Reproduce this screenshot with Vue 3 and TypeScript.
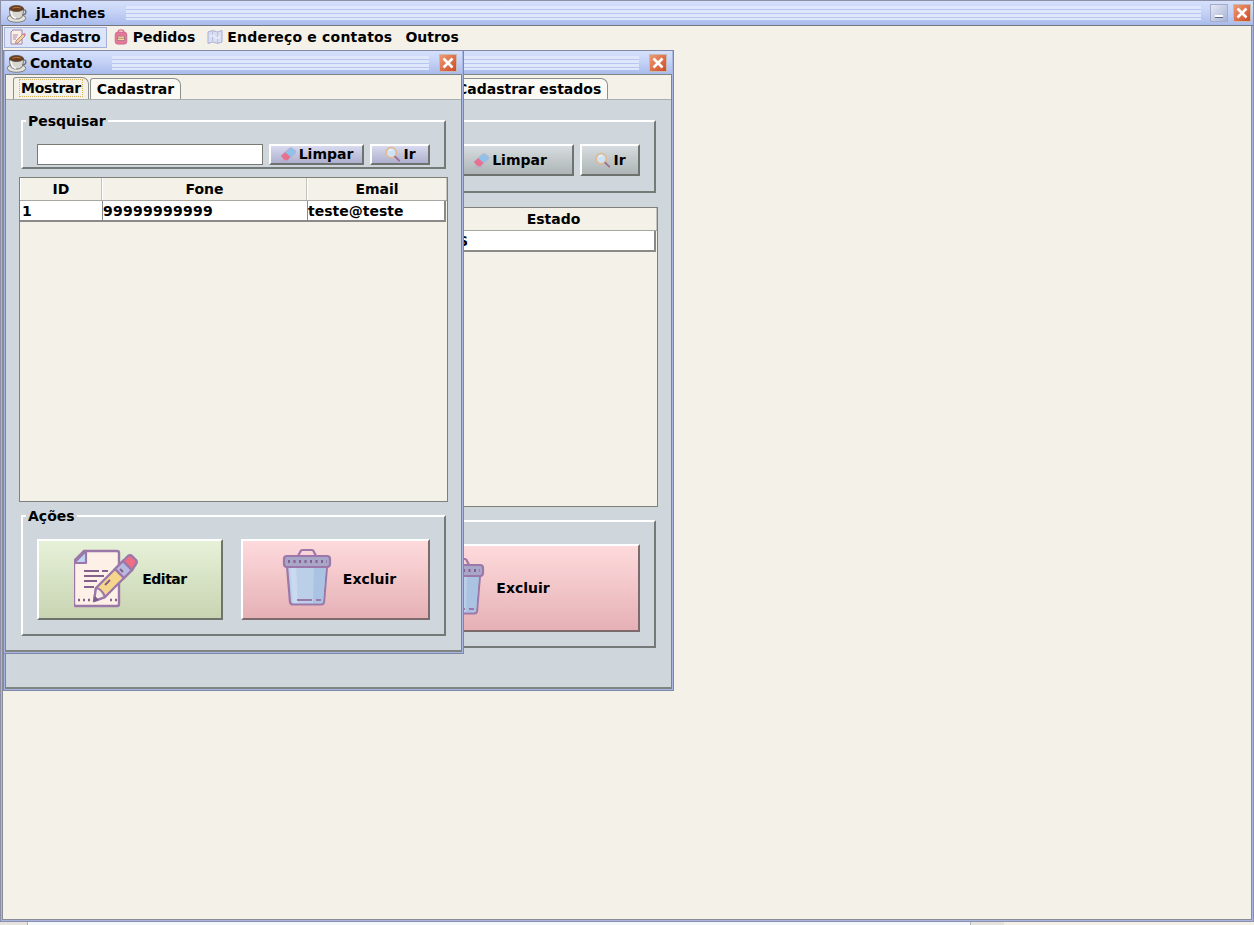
<script setup lang="ts">
const menus = [
  { label: 'Cadastro', icon: 'i-note-small', active: true },
  { label: 'Pedidos', icon: 'i-bag', active: false },
  { label: 'Endereço e contatos', icon: 'i-map', active: false },
  { label: 'Outros', icon: '', active: false },
]
</script>

<template>
  <div class="page">
    <svg class="defs" width="0" height="0">
      <defs>
        <symbol id="i-cup" viewBox="0 0 20 20">
          <ellipse cx="9.500" cy="15.300" rx="9.300" ry="4" fill="#e3e3e1" stroke="#77736c" stroke-width="0.9" />
          <path d="M2.500 5.500 C2.500 14 4.500 16 9.500 16 S16.500 14 16.500 5.500 Z" fill="#d9d7d2" stroke="#6d675e" stroke-width="0.9" />
          <path d="M4 8 C4.500 13 6 15 9 15.300" fill="none" stroke="#fbfaf8" stroke-width="1.500" />
          <path d="M16 7 C20 6 20 11.500 15.500 12" fill="none" stroke="#6d675e" stroke-width="1.200" />
          <ellipse cx="9.500" cy="5.500" rx="7" ry="3" fill="#6a3d1f" stroke="#4a4036" stroke-width="0.7" />
          <path d="M5.500 5.200 Q9 3.500 13.500 5" fill="none" stroke="#b8793f" stroke-width="1" />
        </symbol>
        <symbol id="i-note" viewBox="0 0 64 64">
          <path d="M10 4 H43 Q45 4 45 6 V57 Q45 59 43 59 H2 Q0 59 0 57 V14 Z" fill="#fdf1e7" stroke="#9b78a9" stroke-width="2.400" />
          <path d="M12 4 V16 H0 Z" fill="#bdd5f2" stroke="#9b78a9" stroke-width="2.200" stroke-linejoin="round" />
          <path d="M10 24 H25 M28 24 H34 M10 29 H30 M10 34 H23 M10 40 H20" stroke="#84608f" stroke-width="2.200" />
          <path d="M4 53 H6 M9 53 H11 M14 53 H16 M36 53 H38 M41 53 H43" stroke="#84608f" stroke-width="2.400" />
          <path d="M22 41 L49 14 L58 23 L31 50 L20 54 Z" fill="#f6d58c" stroke="#9b78a9" stroke-width="2.400" stroke-linejoin="round" />
          <path d="M20 54 L22 41 Q28 42 31 50 Z" fill="#f7ece4" stroke="#9b78a9" stroke-width="2.200" stroke-linejoin="round" />
          <path d="M19 55 L21 49 L25 53 Z" fill="#7e5a8c" />
          <path d="M41 22 L49 14 L58 23 L50 31 Z" fill="#b8b9de" stroke="#9b78a9" stroke-width="2.400" />
          <path d="M49 14 L54 9 Q56 7.500 58 9 L62 13 Q63.500 15 62 17 L58 23 Z" fill="#ee6e85" stroke="#9b78a9" stroke-width="2.400" stroke-linejoin="round" />
          <path d="M46 22 L49 25 M31 38 L36 33" stroke="#84608f" stroke-width="2" />
        </symbol>
        <symbol id="i-note-small" viewBox="0 0 16 16">
          <path d="M3 1 H12 V15 H1 V3 Z" fill="#fbeee4" stroke="#9f84ae" stroke-width="1" />
          <path d="M3 6 H8 M3 8 H7 M3 10 H6" stroke="#a080ae" stroke-width="0.9" />
          <path d="M6 12 L13 5 L15 7 L8 14 L5.500 14.500 Z" fill="#f3d38c" stroke="#a67f9f" stroke-width="0.9" />
          <path d="M13 5 L14.200 3.800 L16 5.600 L15 7 Z" fill="#e97a8e" />
        </symbol>
        <symbol id="i-bag" viewBox="0 0 16 18">
          <path d="M5 4 V2.500 Q5 1 8 1 T11 2.500 V4" fill="none" stroke="#d9708e" stroke-width="1.600" />
          <rect x="1.500" y="3.500" width="13" height="13.500" rx="3" fill="#e7789a" stroke="#c8688c" />
          <rect x="4" y="8" width="8" height="5" fill="#f4d99a" stroke="#9c6c88" stroke-width="0.8" />
          <path d="M4 10.500 H12" stroke="#9c6c88" stroke-width="0.8" />
        </symbol>
        <symbol id="i-map" viewBox="0 0 16 16">
          <path d="M1 3 L5.500 1.500 L10.500 3 L15 1.500 V13 L10.500 14.500 L5.500 13 L1 14.500 Z" fill="#d9def3" stroke="#aab0d4" />
          <path d="M5.500 1.500 V13 M10.500 3 V14.500" stroke="#b7bddd" stroke-width="0.9" />
          <path d="M3 8 Q6 5 8 8 T13 7" fill="none" stroke="#eef1fc" stroke-width="1.300" />
        </symbol>
        <symbol id="i-eraser" viewBox="0 0 18 16">
          <path d="M1 10 L10 2 Q11.500 .8 13 1.800 L16.500 4.500 Q17.500 6 16 7.500 L8 14.500 H5 Z" fill="#8fc1ea" stroke="#b9a9c8" stroke-width="0.7" />
          <path d="M1 10 L5.500 6.200 L11 11 L8 14.500 H5 Z" fill="#e8718d" />
          <path d="M1.500 15.500 H10" stroke="#b8a8c4" stroke-width="0.8" />
        </symbol>
        <symbol id="i-search" viewBox="0 0 18 18">
          <circle cx="7.500" cy="7.500" r="5.800" fill="#cfe2f5" stroke="#e3b787" stroke-width="1.700" />
          <path d="M5 5.500 Q6.500 3.800 9 4.500" fill="none" stroke="#fff" stroke-width="1" />
          <path d="M12 12 L16.500 16.500" stroke="#a0708f" stroke-width="2.200" stroke-linecap="round" />
        </symbol>
        <symbol id="i-trash" viewBox="0 0 64 64">
          <path d="M23 9 L26 3.500 Q26.500 3 28 3 H37 Q38 3 38.500 4 L41 9" fill="none" stroke="#9b78a9" stroke-width="2.200" />
          <path d="M12 19 H52 L49 55 Q48.800 57.500 46 57.500 H18 Q15.500 57.500 15 55 Z" fill="#bccfe9" stroke="#9b78a9" stroke-width="2.200" />
          <path d="M39 20 H51 L48 56 H38 Z" fill="#aac3e2" />
          <path d="M15 20 H21 L23 56 H18 Z" fill="#c9d9ef" />
          <rect x="9" y="9" width="46" height="11" rx="3" fill="#a8a7c8" stroke="#9b78a9" stroke-width="2.200" />
          <path d="M13 14.500 H52" stroke="#84608f" stroke-width="3" stroke-dasharray="2 3.500" />
          <path d="M22 53 H37 M41 53 H46" stroke="#9b78a9" stroke-width="1.800" />
        </symbol>
        <symbol id="i-x" viewBox="0 0 16 16">
          <path d="M3.500 3.500 L12.500 12.500 M12.500 3.500 L3.500 12.500" stroke="#fff" stroke-width="2.600" />
        </symbol>
      </defs>
    </svg>

    <div class="frame">
      <header class="titlebar main-title">
        <svg class="cup"><use href="#i-cup" /></svg>
        <span class="main-name">jLanches</span>
        <span class="bumps"></span>
        <button class="winbtn min"><span class="min-mark"></span></button>
        <button class="winbtn close"><svg class="x"><use href="#i-x" /></svg></button>
      </header>

      <nav class="menubar">
        <div v-for="m in menus" :key="m.label" class="menu" :class="{ active: m.active, plain: !m.icon }">
          <svg v-if="m.icon" class="mi"><use :href="'#' + m.icon" /></svg>
          <span>{{ m.label }}</span>
        </div>
      </nav>

      <main class="desktop">
        <!-- Janela de trás: só a parte visível tem texto -->
        <section class="window back">
          <header class="titlebar win-title">
            <span class="bumps"></span>
            <button class="winbtn close"><svg class="x"><use href="#i-x" /></svg></button>
          </header>
          <div class="body">
            <div class="tabs">
              <div class="tab first sel back-first"></div>
              <div class="tab">Cadastrar estados</div>
            </div>
            <div class="panel">
              <div class="group search">
                <div class="search-row">
                  <input class="field" type="text" />
                  <button class="btn grey limpar"><svg class="bi"><use href="#i-eraser" /></svg>Limpar</button>
                  <button class="btn grey ir"><svg class="bi"><use href="#i-search" /></svg>Ir</button>
                </div>
              </div>
              <div class="table">
                <div class="thead">
                  <div class="th wide"></div>
                  <div class="th estado">Estado</div>
                </div>
                <div class="tr">
                  <div class="td wide"></div>
                  <div class="td estado">S</div>
                </div>
              </div>
              <div class="group actions">
                <div class="action-row">
                  <button class="action green"></button>
                  <button class="action pink"><svg class="big"><use href="#i-trash" /></svg>Excluir</button>
                </div>
              </div>
            </div>
          </div>
        </section>

        <!-- Janela de contato (frente) -->
        <section class="window front">
          <header class="titlebar win-title">
            <svg class="cup"><use href="#i-cup" /></svg>
            <span class="win-name">Contato</span>
            <span class="bumps"></span>
            <button class="winbtn close"><svg class="x"><use href="#i-x" /></svg></button>
          </header>
          <div class="body">
            <div class="tabs">
              <div class="tab first sel"><span class="focus">Mostrar</span></div>
              <div class="tab">Cadastrar</div>
            </div>
            <div class="panel">
              <div class="group search">
                <span class="legend">Pesquisar</span>
                <div class="search-row">
                  <input class="field" type="text" />
                  <button class="btn lav limpar"><svg class="bi"><use href="#i-eraser" /></svg>Limpar</button>
                  <button class="btn lav ir"><svg class="bi"><use href="#i-search" /></svg>Ir</button>
                </div>
              </div>
              <div class="table">
                <div class="thead">
                  <div class="th c-id">ID</div>
                  <div class="th c-fone">Fone</div>
                  <div class="th c-mail">Email</div>
                </div>
                <div class="tr">
                  <div class="td c-id">1</div>
                  <div class="td c-fone">99999999999</div>
                  <div class="td c-mail">teste@teste</div>
                </div>
              </div>
              <div class="group actions">
                <span class="legend">Ações</span>
                <div class="action-row">
                  <button class="action green"><svg class="big"><use href="#i-note" /></svg><span class="ed">Editar</span></button>
                  <button class="action pink"><svg class="big"><use href="#i-trash" /></svg>Excluir</button>
                </div>
              </div>
            </div>
          </div>
        </section>
      </main>
    </div>

    <footer class="strip">
      <span class="s-a"></span>
      <span class="s-b"></span>
      <span class="s-c"></span>
      <span class="s-d"></span>
    </footer>
  </div>
</template>

<style>
html, body { margin: 0; background: #f4f1e9; overflow: hidden; }
</style>

<style scoped>
.page {
  width: 1254px;
  height: 925px;
  display: flex;
  flex-direction: column;
  overflow: hidden;
  font: bold 14px "DejaVu Sans", sans-serif;
  color: #000;
  background: #f4f1e9;
}
.defs { position: absolute; }
.frame {
  height: 922px;
  box-sizing: border-box;
  border: 1px solid #8d8fa6;
  box-shadow:
    inset 1px 0 0 #a9b6e4, inset -1px 0 0 #a9b6e4, inset 0 -1px 0 #a9b6e4,
    inset 2px 0 0 #8a8c98, inset -2px 0 0 #8a8c98, inset 0 -2px 0 #8a8c98;
  display: flex;
  flex-direction: column;
}
.titlebar {
  display: flex;
  align-items: center;
  background: linear-gradient(#d6e0fb, #c6d3f6 45%, #a9bbec);
  flex: none;
}
.main-title {
  height: 24px;
  padding: 0 2px 0 6px;
  border-bottom: 1px solid #74767e;
}
.main-name { margin-left: 9px; }
.cup { width: 20px; height: 20px; flex: none; }
.bumps {
  flex: 1;
  height: 14px;
  margin: 0 9px 0 21px;
  background: repeating-linear-gradient(#dfe7fc 0 3px, #b7c5ef 3px 4px);
}
.winbtn {
  width: 18px;
  height: 18px;
  box-sizing: border-box;
  padding: 0;
  flex: none;
  display: flex;
  align-items: center;
  justify-content: center;
  border: 1px solid #8c93ac;
}
.min {
  margin-right: 5px;
  background: linear-gradient(135deg, #e4e9f7, #a8b3d4);
  border-color: #a6adc6;
}
.min-mark { width: 8px; height: 2px; margin-top: 6px; background: #fff; box-shadow: 0 1px 0 #5b6486; }
.close {
  background: linear-gradient(135deg, #ee9a72, #cc4c28);
  border-color: #c9b9b4;
}
.x { width: 16px; height: 16px; }
.menubar {
  height: 24px;
  box-sizing: border-box;
  padding: 0 0 2px 1px;
  flex: none;
  display: flex;
  align-items: center;
  margin: 0 2px;
  background: #f4f1e9;
}
.menu {
  height: 21px;
  box-sizing: border-box;
  display: flex;
  align-items: center;
  gap: 4px;
  padding: 0 5px;
  border: 1px solid transparent;
}
.menu:nth-child(3) span { letter-spacing: 0.2px; }
.menu.active { background: #dde5f9; border-color: #a4b2dc; }
.menu.plain { padding-left: 6px; }
.mi { width: 16px; height: 16px; flex: none; }
.desktop {
  position: relative;
  flex: 1;
  margin: 0 2px 2px;
  background: #f4f1e9;
}
.window {
  position: absolute;
  left: 0;
  top: 0;
  box-sizing: border-box;
  border: 1px solid #7f88a6;
  padding: 0 1px 1px;
  display: flex;
  flex-direction: column;
  background: #a9b6e4;
}
.back { width: 671px; height: 641px; }
.front { width: 461px; height: 604px; }
.win-title {
  height: 23px;
  padding: 0 5px 0 2px;
}
.win-name { margin-left: 3px; }
.win-title .bumps { margin: 0 10px 0 20px; }
.body {
  flex: 1;
  display: flex;
  flex-direction: column;
  border: 1px solid #808580;
  border-bottom-width: 2px;
  background: #f4f1e9;
  min-height: 0;
}
.tabs {
  height: 24px;
  flex: none;
  display: flex;
  align-items: flex-end;
  padding-left: 7px;
  gap: 1px;
}
.tab {
  height: 21px;
  box-sizing: border-box;
  padding: 0 6px;
  display: flex;
  align-items: center;
  border: 1px solid #8d908c;
  border-bottom: 0;
  border-radius: 3px 7px 0 0;
  background: #fbf9f4;
  white-space: nowrap;
}
.tab.sel { background: #f4f1e9; height: 22px; }
.back-first { width: 436px; }
.focus { outline: 1px dotted #d9b35a; outline-offset: 0; padding: 0 1px; letter-spacing: -0.3px; margin-bottom: 1px; }
.panel {
  flex: 1;
  background: #cfd7dd;
  border-top: 1px solid #a9aeb0;
  padding: 0 13px;
  display: flex;
  flex-direction: column;
  min-height: 0;
}
.group {
  position: relative;
  flex: none;
  margin: 0 2px;
  box-sizing: border-box;
  border: 2px solid;
  border-color: #fff #757a78 #757a78 #fff;
}
.legend {
  position: absolute;
  left: 3px;
  top: -9px;
  padding: 0 2px;
  line-height: 16px;
  background: #cfd7dd;
}
.search { margin-top: 20px; height: 49px; padding: 22px 14px 0 14px; }
.search-row { display: flex; gap: 6px; height: 21px; }
.field {
  flex: 1;
  min-width: 0;
  box-sizing: border-box;
  border: 1px solid #777a70;
  background: #fff;
  padding: 0;
  margin: 0;
}
.btn {
  box-sizing: border-box;
  padding: 0 0 1px;
  display: flex;
  align-items: center;
  justify-content: center;
  gap: 2px;
  font: bold 14px "DejaVu Sans", sans-serif;
  color: #000;
  border: 2px solid;
  border-color: #fff #6f7370 #6f7370 #fff;
}
.btn.lav { background: linear-gradient(#d8daef, #aeb0cf); }
.btn.grey { background: linear-gradient(#d6dcdf, #aeb5b6); }
.bi { width: 17px; height: 16px; flex: none; }
.limpar { width: 95px; }
.ir { width: 60px; }
.table {
  margin-top: 8px;
  flex: none;
  height: 325px;
  box-sizing: border-box;
  border: 1px solid #7d7f78;
  background: #f4f1e9;
}
.thead { display: flex; height: 22px; border-bottom: 1px solid #a7a8a2; }
.th {
  box-sizing: border-box;
  display: flex;
  align-items: center;
  justify-content: center;
  border-right: 1px solid #c3c4bd;
  border-left: 1px solid #fff;
  line-height: 20px;
}
.tr {
  display: flex;
  height: 21px;
  width: calc(100% - 1px);
  box-sizing: border-box;
  background: #fff;
  border-bottom: 2px solid #8a8b88;
  border-right: 2px solid #8a8b88;
}
.td {
  box-sizing: border-box;
  padding-left: 1px;
  line-height: 20px;
  border-left: 1px solid transparent;
}
.c-id { width: 82px; }
.c-fone { width: 205px; }
.td.c-fone { letter-spacing: 0.25px; }
.c-mail { flex: 1; }
.td.c-fone, .td.c-mail { border-left-color: #8a8b88; padding-left: 0; }
.wide { width: 430px; }
.estado { flex: 1; }
.td.estado { padding-left: 7px; }
.actions { margin-top: 13px; height: 121px; padding: 22px 14px 0 14px; }
.action-row { display: grid; grid-template-columns: 186px 189px; justify-content: space-between; }
.action {
  height: 81px;
  box-sizing: border-box;
  padding: 0 0 2px;
  display: flex;
  align-items: center;
  justify-content: center;
  gap: 4px;
  font: bold 14px "DejaVu Sans", sans-serif;
  color: #000;
  border: 2px solid;
  border-color: #fff #6e746b #6e746b #fff;
}
.ed { letter-spacing: -0.5px; }
.green { background: linear-gradient(#e6f1d8, #c8d4b2); }
.pink { background: linear-gradient(#fedadc, #e5b1b6); border-color: #fff #7d6a6c #7d6a6c #fff; }
.big { width: 64px; height: 64px; flex: none; }
.green .big { margin-left: 1px; }

/* medidas da janela de trás */
.back .search { height: 73px; }
.back .search-row { height: 32px; }
.back .limpar { width: 128px; }
.back .table { margin-top: 14px; height: 300px; }
.back .actions { height: 128px; }
.back .action-row { grid-template-columns: 1fr 302px; column-gap: 18px; }
.back .action { height: 88px; padding: 0; }

.strip { flex: 1; display: flex; background: #f4f8fc; }
.s-a { width: 27px; background: #e6e4e0; border-right: 1px solid #b4b4b4; }
.s-b { width: 942px; background: #f3f8fc; }
.s-c { width: 33px; background: #e6e4e0; border-left: 1px solid #b4b4b4; }
.s-d { flex: 1; background: #f4f1e9; }
</style>
